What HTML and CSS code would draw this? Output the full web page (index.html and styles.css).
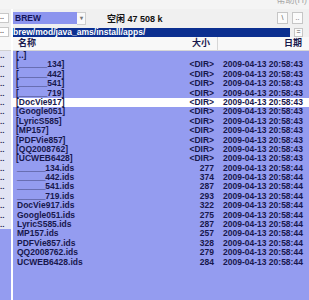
FILE: index.html
```html
<!DOCTYPE html>
<html lang="zh">
<head>
    <meta charset="UTF-8">
    <title>BREW</title>
    <link rel="stylesheet" href="styles.css">
</head>
<body>

<div class="menubar"><div class="menu-help">帮助(H)</div></div>

<div class="main">
    <!-- left panel, mostly hidden -->
    <div class="left">
        <div class="tool-row"><span class="stub">..</span></div>
        <div class="path-row"><span class="stub">..</span></div>
        <div class="head-row"></div>
        <div class="left-list" id="leftList"></div>
    </div>

    <!-- right panel -->
    <div class="right">
        <div class="tool-row">
            <div class="combo">BREW</div>
            <div class="combo-btn">▾</div>
            <div class="free">空闲 47 508 k</div>
            <div class="spacer"></div>
            <div class="small-btn">\</div>
            <div class="small-btn">..</div>
        </div>
        <div class="path-row">
            <div class="path">brew/mod/java_ams/install/apps/</div>
            <div class="small-btn eq">=</div>
        </div>
        <div class="head-row">
            <div class="col-name">名称</div>
            <div class="col-size">大小</div>
            <div class="col-date">日期</div>
        </div>
        <div class="list" id="fileList"></div>
    </div>
</div>

<script>
    var files = [
        ["[..]", "", ""],
        ["[______134]", "<DIR>", "2009-04-13 20:58:43"],
        ["[______442]", "<DIR>", "2009-04-13 20:58:43"],
        ["[______541]", "<DIR>", "2009-04-13 20:58:43"],
        ["[______719]", "<DIR>", "2009-04-13 20:58:43"],
        ["[DocVie917]", "<DIR>", "2009-04-13 20:58:43"],
        ["[Google051]", "<DIR>", "2009-04-13 20:58:43"],
        ["[LyricS585]", "<DIR>", "2009-04-13 20:58:43"],
        ["[MP157]", "<DIR>", "2009-04-13 20:58:43"],
        ["[PDFVie857]", "<DIR>", "2009-04-13 20:58:43"],
        ["[QQ2008762]", "<DIR>", "2009-04-13 20:58:43"],
        ["[UCWEB6428]", "<DIR>", "2009-04-13 20:58:43"],
        ["______134.ids", "277", "2009-04-13 20:58:44"],
        ["______442.ids", "374", "2009-04-13 20:58:44"],
        ["______541.ids", "287", "2009-04-13 20:58:44"],
        ["______719.ids", "293", "2009-04-13 20:58:44"],
        ["DocVie917.ids", "322", "2009-04-13 20:58:44"],
        ["Google051.ids", "275", "2009-04-13 20:58:44"],
        ["LyricS585.ids", "287", "2009-04-13 20:58:44"],
        ["MP157.ids", "257", "2009-04-13 20:58:44"],
        ["PDFVie857.ids", "328", "2009-04-13 20:58:44"],
        ["QQ2008762.ids", "279", "2009-04-13 20:58:44"],
        ["UCWEB6428.ids", "284", "2009-04-13 20:58:44"]
    ];

    var list = document.getElementById("fileList");
    files.forEach(function (f, i) {
        var row = document.createElement("div");
        row.className = "file-row" + (i === 5 ? " selected" : "") + (f[0].charAt(0) === "[" ? "" : " file");
        row.innerHTML = '<span class="name"></span><span class="size"></span><span class="date"></span>';
        row.children[0].textContent = f[0];
        row.children[1].textContent = f[1];
        row.children[2].textContent = f[2];
        list.appendChild(row);
    });

    var left = document.getElementById("leftList");
    for (var i = 0; i < 19; i++) {
        var r = document.createElement("div");
        r.className = "left-row";
        r.textContent = "..";
        left.appendChild(r);
    }
</script>

</body>
</html>
```

FILE: styles.css
```css
body {
    margin: 0;
    width: 309px;
    height: 300px;
    overflow: hidden;
    background: #f0f0f0;
    font-family: "Liberation Sans", Arial, "Noto Sans CJK SC", sans-serif;
    font-size: 8.5px;
    font-weight: bold;
    color: #17174c;
}
.menubar {
    height: 9px;
    overflow: hidden;
    background: #f4f4f4;
    padding-right: 2px;
}
.menu-help {
    margin-top: -6px;
    height: 12px;
    line-height: 12px;
    text-align: right;
    font-size: 9px;
    font-weight: normal;
    color: #a8a8a8;
}
.main {
    display: flex;
    height: 291px;
}

/* left panel */
.left {
    width: 11px;
    border-right: 2px solid #ffffff;
    display: flex;
    flex-direction: column;
    overflow: hidden;
    background: #949cf0;
}
.left .tool-row, .left .path-row {
    background: #f0f0f0;
}
.stub {
    display: block;
    width: 8px;
    height: 8px;
    line-height: 6px;
    background: #ffffff;
    border: 1px solid #c8c8c8;
    border-left: none;
    font-size: 7px;
    color: #666;
}
.left .head-row {
    border-bottom: 1px solid #d0d0d0;
}
.left-row {
    height: 9.4px;
    line-height: 9.4px;
    font-size: 8px;
    background: #e2e4f4;
    color: #17174c;
}

/* right panel */
.right {
    flex: 1;
    display: flex;
    flex-direction: column;
    min-width: 0;
}
.tool-row {
    height: 18px;
    display: flex;
    align-items: center;
    padding-right: 6px;
}
.left .tool-row, .left .path-row {
    padding-right: 0;
}
.combo {
    width: 62px;
    height: 12px;
    line-height: 12px;
    padding-left: 2px;
    background: #8c94ee;
    color: #14145a;
}
.combo-btn {
    width: 8px;
    height: 11px;
    line-height: 11px;
    text-align: center;
    font-size: 6px;
    color: #777;
    background: #fafafa;
    border: 1px solid #cfcfcf;
    border-left: none;
}
.free {
    margin-left: 21px;
    font-size: 9px;
    color: #111;
}
.spacer {
    flex: 1;
}
.small-btn {
    width: 9px;
    height: 10px;
    line-height: 9px;
    margin-left: 4px;
    text-align: center;
    font-size: 7px;
    font-weight: normal;
    color: #555;
    background: #fbfbfb;
    border: 1px solid #c6c6c6;
}
.path-row {
    height: 10px;
    display: flex;
    align-items: center;
    padding-right: 6px;
}
.path {
    flex: 1;
    height: 9px;
    line-height: 9px;
    background: #0b2f90;
    color: #ffffff;
    overflow: hidden;
}
.small-btn.eq {
    height: 7px;
    line-height: 6px;
    width: 7px;
}
.head-row {
    height: 13px;
    line-height: 13px;
    background: #f8f8f8;
    border-bottom: 1px solid #d6d6d6;
    display: grid;
    grid-template-columns: 1fr 35px 91px;
    font-size: 9px;
    color: #17174c;
}
.col-name {
    padding-left: 5px;
}
.col-size {
    text-align: right;
    padding-right: 7px;
    border-right: 1px solid #d6d6d6;
}
.col-date {
    text-align: right;
    padding-right: 7px;
}
.list {
    flex: 1;
    background: #949cf0;
}
.file-row {
    height: 9.4px;
    line-height: 9.4px;
    display: grid;
    grid-template-columns: 1fr 40px 86px;
    white-space: nowrap;
}
.file-row .name {
    padding-left: 3px;
}
.file-row.file .name {
    padding-left: 4px;
}
.file-row .size {
    text-align: right;
    padding-right: 9px;
}
.file-row.selected {
    background: #ffffff;
}
```
